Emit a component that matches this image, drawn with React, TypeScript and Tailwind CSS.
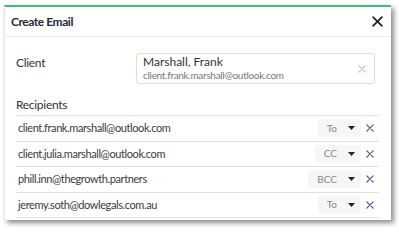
import React from "react";

const rows = [
  { email: "client.frank.marshall@outlook.com", type: "To" },
  { email: "client.julia.marshall@outlook.com", type: "CC" },
  { email: "phill.inn@thegrowth.partners", type: "BCC" },
  { email: "jeremy.soth@dowlegals.com.au", type: "To" },
];

function Caret() {
  return (
    <svg width="7" height="4" viewBox="0 0 7 4" className="block">
      <path d="M0 0 L7 0 L3.5 4 Z" fill="#222" />
    </svg>
  );
}

function XIcon({ size, color, sw }: { size: number; color: string; sw: number }) {
  return (
    <svg width={size} height={size} viewBox="0 0 10 10" className="block">
      <path d="M1 1 L9 9 M9 1 L1 9" stroke={color} strokeWidth={sw} strokeLinecap="round" />
    </svg>
  );
}

export default function App() {
  return (
    <div
      className="w-[399px] h-[232px] bg-white pl-[4px] pt-[5px]"
      style={{ fontFamily: 'Lato, "Open Sans", sans-serif' }}
    >
      <div className="w-[387px] h-[215px] bg-white border-t-2 border-t-[#3cbf72] border-l border-l-[#e3e3e3] shadow-[3px_3px_5px_rgba(0,0,0,0.45)] flex flex-col">
        <div className="h-[30px] flex items-center justify-between pl-[6px] pr-[8px] border-b border-[#eeeeee]">
          <span className="text-[12px] font-bold text-[#1e2a3b] tracking-[-0.45px]">Create Email</span>
          <XIcon size={11} color="#222" sw={1.6} />
        </div>
        <div className="flex flex-col pl-[11px] pr-[12px] pt-[16px]">
          <div className="flex items-start">
            <div className="w-[120px] pt-[1px] text-[12px] text-[#333] tracking-[-0.3px]">Client</div>
            <div className="w-[239px] h-[31px] border border-[#dddddd] rounded-[3px] flex items-center justify-between pl-[6px] pr-[8px]">
              <div className="flex flex-col leading-none">
                <span className="text-[12px] text-[#333] leading-[14px]">Marshall, Frank</span>
                <span className="text-[10px] text-[#777] leading-[13px] tracking-[-0.3px]">client.frank.marshall@outlook.com</span>
              </div>
              <XIcon size={8} color="#bbb" sw={1.3} />
            </div>
          </div>
          <div className="mt-[12px] text-[12px] text-[#333] h-[19px] tracking-[-0.3px]">Recipients</div>
          <div className="w-[363px] border-t border-[#e0e0e0]">
            {rows.map((r) => (
              <div
                key={r.email}
                className="h-[25.5px] flex items-center justify-between border-b border-[#e0e0e0] pl-[2px]"
              >
                <span className="text-[11px] text-[#3a3a3a] tracking-[-0.4px]">{r.email}</span>
                <div className="flex items-center">
                  <div className="h-[18px] bg-[#f6f6f6] rounded-[3px] flex items-center pl-[9px] pr-[6px] gap-[11px]">
                    <span className="text-[10px] text-[#888]">{r.type}</span>
                    <Caret />
                  </div>
                  <div className="w-[18px] flex justify-center">
                    <XIcon size={8} color="#3f5f87" sw={1.5} />
                  </div>
                </div>
              </div>
            ))}
          </div>
        </div>
      </div>
    </div>
  );
}
